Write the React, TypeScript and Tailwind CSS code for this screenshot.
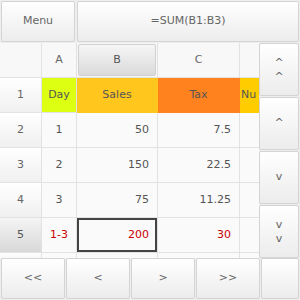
import React from "react";

const font = { fontFamily: '"DejaVu Sans", Verdana, sans-serif' };

const btn =
  "flex items-center justify-center border border-[#d4d4d4] bg-gradient-to-b from-[#ffffff] to-[#ececec] text-[#666] text-[11px] rounded-[2px]";

function Cell({
  children,
  className = "",
}: {
  children?: React.ReactNode;
  className?: string;
}) {
  return (
    <div
      className={
        "relative flex items-center border-r border-b border-[#e2e2e2] text-[11px] overflow-hidden whitespace-nowrap " +
        className
      }
    >
      {children}
    </div>
  );
}

const rowHead =
  "justify-center bg-gradient-to-b from-[#ffffff] to-[#f0f0f0] text-[#666] border-[#d8d8d8]";
const rowHeadSel =
  "justify-center bg-gradient-to-b from-[#f4f4f4] to-[#d8d8d8] text-[#555] border-[#cfcfcf]";

export default function App() {
  const rows = [
    ["2", "1", "50", "7.5"],
    ["3", "2", "150", "22.5"],
    ["4", "3", "75", "11.25"],
  ];
  return (
    <div
      style={font}
      className="w-[300px] h-[300px] bg-[#eeeeee] flex flex-col overflow-hidden"
    >
      {/* Top bar */}
      <div className="h-[43px] flex gap-[2px] p-[1px] pb-[1px]">
        <div className={btn + " w-[74px] h-[41px]"}>Menu</div>
        <div className={btn + " flex-1 h-[41px]"}>=SUM(B1:B3)</div>
      </div>

      {/* Middle */}
      <div className="flex h-[215px]">
        <div className="w-[259px] h-[215px] overflow-hidden bg-[#fafafa]">
          <div className="grid grid-cols-[42px_35px_81px_82px_30px] grid-rows-[35px_35px_35px_35px_35px_35px_10px]">
            {/* header row */}
            <Cell className="bg-[#f8f8f8]"></Cell>
            <Cell className="justify-center text-[#666] bg-[#f8f8f8]">A</Cell>
            <Cell className="justify-center p-[1px] bg-[#f8f8f8]">
              <div className="w-full h-full flex items-center justify-center bg-gradient-to-b from-[#f6f6f6] to-[#dadada] border border-[#d0d0d0] rounded-[2px] text-[#555]">
                B
              </div>
            </Cell>
            <Cell className="justify-center text-[#666] bg-[#f8f8f8]">C</Cell>
            <Cell className="bg-[#f8f8f8]"></Cell>

            {/* row 1 */}
            <Cell className={rowHead}>1</Cell>
            <Cell className="justify-center bg-[#ddff11] text-[#555] border-[#ddff11]">
              Day
            </Cell>
            <Cell className="justify-center bg-[#ffc61e] text-[#555] border-[#ffc61e]">
              Sales
            </Cell>
            <Cell className="justify-center bg-[#ff821f] text-[#555] border-[#ff821f]">
              Tax
            </Cell>
            <Cell className="bg-[#ffcc00] text-[#555] border-[#ffcc00] pl-[1px]">
              Nu
            </Cell>

            {rows.map((r) => (
              <React.Fragment key={r[0]}>
                <Cell className={rowHead}>{r[0]}</Cell>
                <Cell className="justify-center text-[#555]">{r[1]}</Cell>
                <Cell className="justify-end pr-[8px] text-[#555]">{r[2]}</Cell>
                <Cell className="justify-end pr-[8px] text-[#555]">{r[3]}</Cell>
                <Cell></Cell>
              </React.Fragment>
            ))}

            {/* row 5 */}
            <Cell className={rowHeadSel}>5</Cell>
            <Cell className="justify-center text-[#cc0000]">1-3</Cell>
            <Cell className="justify-end pr-[8px] text-[#cc0000]">
              <div className="absolute inset-0 border-2 border-[#444]" />
              <span className="relative">200</span>
            </Cell>
            <Cell className="justify-end pr-[8px] text-[#cc0000]">30</Cell>
            <Cell></Cell>

            {/* sliver row */}
            <Cell className={rowHead}></Cell>
            <Cell></Cell>
            <Cell></Cell>
            <Cell></Cell>
            <Cell></Cell>
          </div>
        </div>

        {/* Scroll column */}
        <div className="w-[41px] flex flex-col gap-[1px] pr-[1px] pt-0">
          <div className={btn + " h-[53px] flex-col leading-[14px]"}>
            <span>^</span>
            <span>^</span>
          </div>
          <div className={btn + " h-[53px]"}>^</div>
          <div className={btn + " h-[53px]"}>v</div>
          <div className={btn + " h-[53px] flex-col leading-[14px]"}>
            <span>v</span>
            <span>v</span>
          </div>
        </div>
      </div>

      {/* Bottom bar */}
      <div className="h-[42px] flex gap-[1px] p-[1px] pt-0">
        <div className={btn + " w-[64px] h-[41px]"}>&lt;&lt;</div>
        <div className={btn + " w-[64px] h-[41px]"}>&lt;</div>
        <div className={btn + " w-[64px] h-[41px]"}>&gt;</div>
        <div className={btn + " w-[64px] h-[41px]"}>&gt;&gt;</div>
        <div className={btn + " flex-1 h-[41px]"}></div>
      </div>
    </div>
  );
}
